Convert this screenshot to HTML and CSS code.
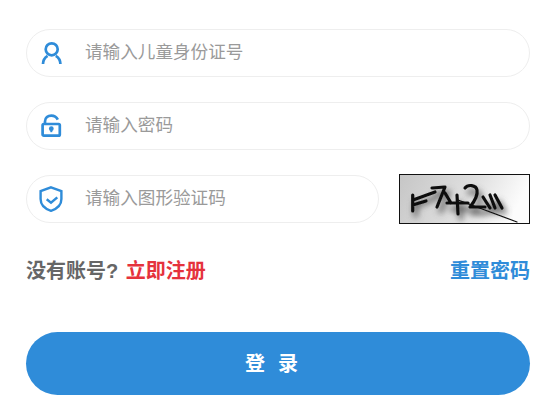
FILE: index.html
```html
<!DOCTYPE html>
<html lang="zh-CN">
<head>
<meta charset="utf-8">
<title>登录</title>
<link rel="stylesheet" href="styles.css">
</head>
<body>
<form class="login">
  <label class="field">
    <svg class="icon" viewBox="0 0 24 24"><circle cx="11.700" cy="8.300" r="6"/><path d="M3 23c0-3.500 1.500-6.300 4.600-8.200M20.400 23c0-3.500-1.500-6.300-4.600-8.200"/></svg>
    <span class="hint">请输入儿童身份证号</span>
  </label>
  <label class="field">
    <svg class="icon" viewBox="0 0 24 24"><rect x="2.600" y="10" width="17.200" height="11.700" rx="1.200"/><path d="M5 10V7.500C5 3.600 8 1.600 11.300 1.600c2.800 0 5.200 1.400 6.500 4"/><circle class="solid" cx="11.300" cy="14.700" r="2.400"/><path class="stem" d="M11.300 15v3.200"/></svg>
    <span class="hint">请输入密码</span>
  </label>
  <div class="captcha-row">
    <label class="field field-short">
      <svg class="icon icon-shield" viewBox="0 0 26 26"><path d="M13 1.400 23.400 5.200V13c0 5.600-4.200 9.800-10.400 11.800C6.800 22.800 2.600 18.600 2.600 13V5.200z"/><path d="m8.700 13.300 4.300 3.400 6.300-5.400"/></svg>
      <span class="hint">请输入图形验证码</span>
    </label>
    <svg class="captcha" viewBox="0 0 129 48" preserveAspectRatio="none" role="img" aria-label="验证码">
      <defs>
        <linearGradient id="bg" x1="0" y1="0" x2="1" y2="0.200">
          <stop offset="0" stop-color="#c6c6c6"/>
          <stop offset="0.600" stop-color="#e0e0e0"/>
          <stop offset="1" stop-color="#fcfcfc"/>
        </linearGradient>
        <filter id="soft" x="-20%" y="-40%" width="140%" height="180%"><feGaussianBlur stdDeviation="3"/></filter>
        <filter id="edge" x="-5%" y="-5%" width="110%" height="110%"><feGaussianBlur stdDeviation="0.600"/></filter>
      </defs>
      <rect width="129" height="48" fill="url(#bg)"/>
      <g class="ink-shadow" filter="url(#soft)" transform="translate(3 6)">
        <path d="M12.700 20 12.700 36M12.700 25 35 16M32 13 45 12 37 32M57 20 58 39M47 28 68 28M65 13C68 9 76 10 77 15 78 20 74 27 70 32L85 32M83 22 90 33M90 20 95 33M95 20 102 33"/>
      </g>
      <g class="ink" filter="url(#edge)">
        <path d="M12.700 20 12.700 36M12.700 30 26 26M13 25 35 17M32 13 45 12 37 32M45 18 51 28M57 20 58 39M47 28 68 28M65 13C68 9 76 10 77 15 78 20 74 27 70 32L85 32M83 22 90 33M90 20 95 33M95 20 102 33"/>
        <path class="thin" d="M58 25 117 47"/>
      </g>
    </svg>
  </div>
  <div class="links">
    <span class="ask">没有账号? <a class="register" href="#">立即注册</a></span>
    <a class="reset" href="#">重置密码</a>
  </div>
  <button class="submit" type="button">登录</button>
</form>
</body>
</html>
```
FILE: styles.css
```css
* { box-sizing: border-box; }
html, body { margin: 0; padding: 0; background: #fff; }
body { font-family: "Liberation Sans", "Noto Sans CJK SC", sans-serif; }
.login {
  width: 504px;
  margin-left: 26px;
  padding-top: 29px;
  display: flex;
  flex-direction: column;
}
.field {
  height: 48px;
  border: 1px solid #eeeeee;
  border-radius: 24px;
  display: flex;
  align-items: center;
  padding-left: 13px;
  margin-bottom: 25px;
}
.icon {
  width: 24px;
  height: 24px;
  fill: none;
  stroke: #2f8cd9;
  stroke-width: 2.700;
  flex: none;
  margin-right: 21px;
}
.icon-shield { width: 26px; height: 26px; margin-left: -2px; stroke-width: 2.400; }
.solid { fill: #2f8cd9; stroke: none; }
.stem { stroke-width: 2; }
.hint { font-size: 17.600px; color: #9a9a9a; line-height: 1; }
.captcha-row {
  display: flex;
  justify-content: space-between;
  align-items: center;
  height: 50px;
  margin-top: -1px;
  margin-bottom: 22px;
}
.field-short { width: 353px; margin-bottom: 0; }
.captcha {
  width: 131px;
  height: 50px;
  border: 1px solid #111;
  display: block;
}
.ink path { fill: none; stroke: #111; stroke-width: 3.200; stroke-linecap: round; stroke-linejoin: round; }
.ink .thin { stroke-width: 1.200; }
.ink-shadow path { fill: none; stroke: #555; stroke-width: 4; }
.links {
  display: flex;
  justify-content: space-between;
  align-items: center;
  height: 50px;
  padding-bottom: 3px;
  margin-bottom: 36px;
  font-size: 20px;
  font-weight: 700;
}
.ask { color: #666; }
.register { color: #e5323c; text-decoration: none; margin-left: 2px; }
.reset { color: #2f8cd9; text-decoration: none; }
.submit {
  height: 63px;
  border: 0;
  padding: 0 0 2px;
  border-radius: 32px;
  background: #2f8cd9;
  color: #fff;
  font-family: inherit;
  font-size: 20px;
  font-weight: 700;
  letter-spacing: 13px;
}
```
